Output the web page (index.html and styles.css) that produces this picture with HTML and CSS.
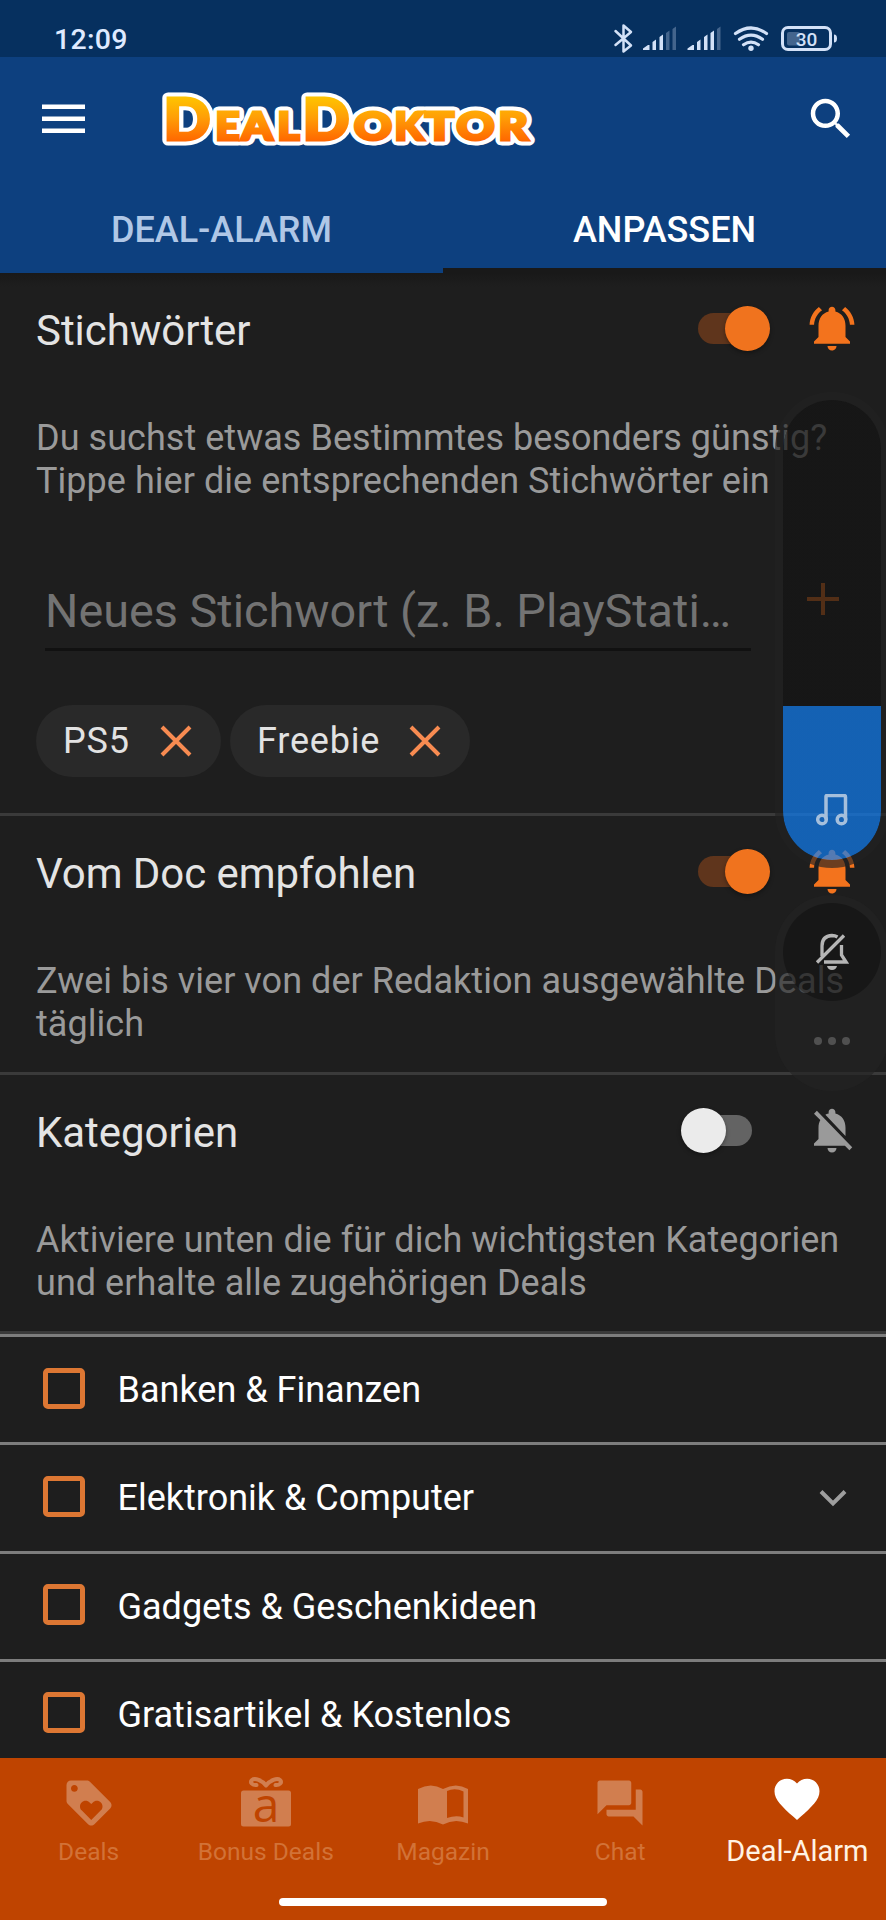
FILE: index.html
```html
<!DOCTYPE html>
<html lang="de">
<head>
<meta charset="utf-8">
<title>DealDoktor</title>
<link rel="stylesheet" href="styles.css">
</head>
<body>
<svg class="defs" width="0" height="0" aria-hidden="true">
  <symbol id="bell-on" viewBox="0 0 24 24"><path d="M7.58 4.08L6.15 2.65C3.75 4.48 2.17 7.3 2.03 10.5h2c.15-2.65 1.51-4.97 3.55-6.42zm12.39 6.42h2c-.15-3.2-1.73-6.02-4.12-7.85l-1.42 1.43c2.02 1.45 3.39 3.77 3.54 6.42zM18 11c0-3.07-1.64-5.64-4.5-6.32V4c0-.83-.67-1.5-1.5-1.5s-1.5.67-1.5 1.5v.68C7.63 5.36 6 7.92 6 11v5l-2 2v1h16v-1l-2-2v-5zm-6 11c.14 0 .27-.01.4-.04.65-.14 1.18-.58 1.44-1.18.1-.24.15-.5.15-.78h-4c.01 1.1.9 2 2.01 2z"/></symbol>
  <symbol id="bell-off" viewBox="0 0 24 24"><path d="M20 18.69L7.84 6.14 5.27 3.49 4 4.76l2.8 2.8v.01c-.52.99-.8 2.16-.8 3.42v5l-2 2v1h13.73l2 2L21 19.72l-1-1.03zM12 22c1.11 0 2-.89 2-2h-4c0 1.11.89 2 2 2zm6-7.32V11c0-3.08-1.64-5.64-4.5-6.32V4c0-.83-.67-1.5-1.5-1.5s-1.5.67-1.5 1.5v.68c-.15.03-.29.08-.42.12-.1.03-.2.07-.3.11h-.01c-.01 0-.01 0-.02.01-.23.09-.46.2-.68.31 0 0-.01 0-.01.01L18 14.68z"/></symbol>
  <symbol id="cross" viewBox="0 0 32 32"><path d="M2 2L30 30M30 2L2 30" fill="none" stroke="currentColor" stroke-width="4"/></symbol>
</svg>
<div class="screen">
  <header class="header">
    <div class="status">
      <span class="clock">12:09</span>
      <svg class="status-icons" viewBox="612 22 228 33">
        <path class="line" d="M615.500 31L631 45.500L623.500 51.500V25.500L631 32L615.500 45" stroke-width="2.500"/>
        <g>
          <path d="M643 50v-1.500l5-3.500h1.500v5zM652.500 42l3.500-2.500V50h-3.500zM659.500 37l3.500-2.500V50h-3.500z"/>
          <path class="dim" d="M666 33l3.500-2.500V50h-3.500zM672.500 29l3.500-2.500V50h-3.500z"/>
        </g>
        <g transform="translate(44.500 0)">
          <path d="M643 50v-1.500l5-3.500h1.500v5zM652.500 42l3.500-2.500V50h-3.500zM659.500 37l3.500-2.500V50h-3.500zM666 33l3.500-2.500V50h-3.500z"/>
          <path class="dim" d="M672.500 29l3.500-2.500V50h-3.500z"/>
        </g>
        <path class="line" d="M735.500 33.500Q751 22.500 766.500 33.500M739.500 39.300Q751 31 762.500 39.300M743.500 44.700Q751 39.500 758.500 44.700" stroke-width="3.200"/>
        <circle cx="751" cy="48.300" r="2.700"/>
        <rect class="line" x="782.500" y="27.500" width="48" height="22" rx="5.500" stroke-width="3"/>
        <rect class="dim" x="787" y="32" width="13" height="13.500" rx="2"/>
        <path d="M834 34.500q3 0 3 4t-3 4z"/>
        <text x="806.500" y="45.700" text-anchor="middle">30</text>
      </svg>
    </div>
    <div class="appbar">
      <svg class="menu" viewBox="0 0 43 30"><path d="M0 .5h43v4.500H0zM0 12.500h43V17H0zM0 24.500h43V29H0z"/></svg>
      <svg class="logo" viewBox="160 90 380 58" role="img" aria-label="DealDoktor">
        <defs>
          <linearGradient id="fire" gradientUnits="userSpaceOnUse" x1="0" y1="96" x2="0" y2="141"><stop offset="0" stop-color="#ffc400"/><stop offset=".45" stop-color="#ff9f06"/><stop offset="1" stop-color="#ff6500"/></linearGradient>
          <g id="word">
            <text class="cap" x="163.500" y="138.700" textLength="47" lengthAdjust="spacingAndGlyphs">D</text>
            <text x="215.500" y="138.700" textLength="24" lengthAdjust="spacingAndGlyphs">E</text>
            <text x="241.500" y="138.700" textLength="31" lengthAdjust="spacingAndGlyphs">A</text>
            <text x="277.500" y="138.700" textLength="22" lengthAdjust="spacingAndGlyphs">L</text>
            <text class="cap" x="302.500" y="138.700" textLength="47" lengthAdjust="spacingAndGlyphs">D</text>
            <text x="354" y="138.700" textLength="38" lengthAdjust="spacingAndGlyphs">O</text>
            <text x="394.500" y="138.700" textLength="29" lengthAdjust="spacingAndGlyphs">K</text>
            <text x="425" y="138.700" textLength="29" lengthAdjust="spacingAndGlyphs">T</text>
            <text x="456.500" y="138.700" textLength="38" lengthAdjust="spacingAndGlyphs">O</text>
            <text x="498.500" y="138.700" textLength="29.500" lengthAdjust="spacingAndGlyphs">R</text>
          </g>
        </defs>
        <use href="#word" class="outline"/>
        <use href="#word" class="fill"/>
      </svg>
      <svg class="search" viewBox="0 0 24 24"><path d="M15.500 14h-.79l-.28-.27C15.410 12.590 16 11.110 16 9.500 16 5.910 13.090 3 9.500 3S3 5.910 3 9.500 5.910 16 9.500 16c1.610 0 3.090-.59 4.230-1.570l.27.28v.79l5 4.990L20.490 19l-4.990-5zm-6 0C7.010 14 5 11.990 5 9.500S7.010 5 9.500 5 14 7.010 14 9.500 11.990 14 9.500 14z"/></svg>
    </div>
    <nav class="tabs">
      <a class="tab">DEAL-ALARM</a>
      <a class="tab tab-active">ANPASSEN</a>
    </nav>
  </header>

  <main class="content">
    <section class="section">
      <div class="head"><h2>Stichwörter</h2><span class="switch on"></span><svg class="bell orange"><use href="#bell-on"/></svg></div>
      <p>Du suchst etwas Bestimmtes besonders günstig?<br>Tippe hier die entsprechenden Stichwörter ein</p>
      <div class="entry">
        <div class="field">Neues Stichwort (z. B. PlayStati…</div>
        <svg class="plus" viewBox="0 0 32 32"><path d="M14 0h4v14h14v4H18v14h-4V18H0v-4h14z"/></svg>
      </div>
      <div class="chips">
        <span class="chip">PS5<svg><use href="#cross"/></svg></span>
        <span class="chip">Freebie<svg><use href="#cross"/></svg></span>
      </div>
    </section>
    <section class="section">
      <div class="head"><h2>Vom Doc empfohlen</h2><span class="switch on"></span><svg class="bell orange"><use href="#bell-on"/></svg></div>
      <p>Zwei bis vier von der Redaktion ausgewählte Deals<br>täglich</p>
    </section>
    <section class="section">
      <div class="head"><h2>Kategorien</h2><span class="switch"></span><svg class="bell"><use href="#bell-off"/></svg></div>
      <p>Aktiviere unten die für dich wichtigsten Kategorien<br>und erhalte alle zugehörigen Deals</p>
    </section>
    <ul class="list">
      <li><span class="box"></span>Banken &amp; Finanzen</li>
      <li><span class="box"></span>Elektronik &amp; Computer<svg class="chevron" viewBox="0 0 28 18"><path d="M2 2.500l12 12 12-12"/></svg></li>
      <li><span class="box"></span>Gadgets &amp; Geschenkideen</li>
      <li><span class="box"></span>Gratisartikel &amp; Kostenlos</li>
    </ul>
  </main>

  <footer class="bottom">
    <a class="item"><svg viewBox="0 0 24 24"><path d="M21.410 11.580l-9-9C12.050 2.220 11.550 2 11 2H4c-1.100 0-2 .9-2 2v7c0 .55.22 1.050.59 1.420l9 9c.36.36.86.58 1.410.58.55 0 1.050-.22 1.410-.59l7-7c.37-.36.59-.86.59-1.410 0-.55-.23-1.060-.59-1.420zM5.500 7C4.670 7 4 6.330 4 5.500S4.670 4 5.500 4 7 4.670 7 5.500 6.330 7 5.500 7zm11.770 8.270L13 19.540l-4.270-4.270C8.280 14.810 8 14.190 8 13.500c0-1.380 1.120-2.500 2.500-2.500.69 0 1.320.28 1.770.74l.73.72.73-.73c.45-.45 1.080-.73 1.770-.73 1.380 0 2.500 1.120 2.500 2.500 0 .69-.28 1.320-.73 1.770z"/></svg><span>Deals</span></a>
    <a class="item"><svg viewBox="0 0 54 54"><rect x="2" y="14.500" width="50" height="36" rx="2.500"/><path class="ribbon" d="M27 9.500C23 4.500 16 1.500 13 4S14 9.500 17.500 9M27 9.500C31 4.500 38 1.500 41 4S40 9.500 36.500 9"/><text x="27" y="45.500" text-anchor="middle">a</text></svg><span>Bonus Deals</span></a>
    <a class="item"><svg viewBox="0 0 54 54"><path d="M2 13Q15 6 27 13Q40 6 52 13V47.500Q39 42 27 48.500Q15 42 2 47.500ZM31 15V42Q40 39 47.500 41.500V15.500Q39 11.500 31 15Z" fill-rule="evenodd"/></svg><span>Magazin</span></a>
    <a class="item"><svg viewBox="0 0 24 24"><path d="M21 6h-2v9H6v2c0 .55.45 1 1 1h11l4 4V7c0-.55-.45-1-1-1zm-4 6V3c0-.55-.45-1-1-1H3c-.55 0-1 .45-1 1v14l4-4h10c.55 0 1-.45 1-1z"/></svg><span>Chat</span></a>
    <a class="item item-active"><svg viewBox="0 0 24 24"><path d="M12 21.350l-1.450-1.320C5.400 15.360 2 12.280 2 8.500 2 5.420 4.420 3 7.500 3c1.740 0 3.410.81 4.500 2.090C13.090 3.810 14.760 3 16.500 3 19.580 3 22 5.420 22 8.500c0 3.780-3.400 6.860-8.550 11.540L12 21.350z"/></svg><span>Deal-Alarm</span></a>
    <div class="home"></div>
  </footer>

  <div class="volume">
    <div class="level"><svg viewBox="0 0 32 32"><path d="M10 25.500V2.500Q10 1.500 11 1.500H28Q29.500 1.500 29.500 3V25.500"/><circle cx="6" cy="25.500" r="4.300"/><circle cx="25.500" cy="25.500" r="4.300"/></svg></div>
  </div>
  <div class="sound">
    <div class="mute"><svg viewBox="0 0 34 38"><path d="M7 23V13Q7 3 17 2.500Q20 2.500 22.500 4M2 29.500L29 2.500M9 29H31L26.500 22V12"/><path class="solid" d="M12 33h10q-1 4-5 4t-5-4z"/></svg></div>
    <div class="dots"><i></i><i></i><i></i></div>
  </div>
</div>
</body>
</html>
```

FILE: styles.css
```css
* { box-sizing: border-box; }
body { margin: 0; background: #1e1e1e; font-family: Roboto, sans-serif; }
h2, p, ul { margin: 0; padding: 0; font-weight: 400; }
svg { display: block; fill: currentColor; flex: none; }
.defs { position: absolute; }
.screen { position: relative; display: flex; flex-direction: column; width: 886px; height: 1920px; overflow: hidden; }

/* Header */
.header { flex: none; height: 273px; background: #0d407f; color: #fff; }
.status { display: flex; justify-content: space-between; height: 57px; padding: 22px 46px 0 54px; background: #06305f; color: #d3e1f7; }
.clock { font-size: 28.500px; line-height: 35px; font-weight: 500; letter-spacing: .3px; color: #dfeaff; }
.status-icons { width: 228px; height: 33px; }
.status-icons .line { fill: none; stroke: currentColor; stroke-linecap: round; stroke-linejoin: round; }
.status-icons .dim { opacity: .3; }
.status-icons text { font-size: 19px; font-weight: 500; }
.appbar { display: flex; align-items: center; height: 125px; padding: 0 28px 0 42px; }
.menu { width: 43px; height: 30px; margin-top: -2px; }
.logo { width: 380px; height: 58px; margin-left: 75px; overflow: visible; }
.logo text { font-family: Lato, sans-serif; font-weight: 900; font-size: 38.500px; }
.logo .cap { font-size: 58px; }
.logo .outline { fill: #fff; stroke: #fff; stroke-width: 11px; stroke-linejoin: round; }
.logo .fill { fill: url(#fire); stroke: url(#fire); stroke-width: 3px; }
.search { width: 54px; height: 54px; margin: -2px 0 0 auto; }
.tabs { display: grid; grid-template-columns: 1fr 1fr; height: 91px; }
.tab { padding-top: 10px; text-align: center; font-size: 36px; line-height: 76px; font-weight: 500; color: #b0c7e6; }
.tab-active { color: #fff; border-bottom: 5px solid #191919; }

/* Settings sections */
.content { flex: 1; min-height: 0; overflow: hidden; background: linear-gradient(#191919, #1e1e1e 14px); }
.section { height: 259px; padding: 29px 27px 0 36px; border-bottom: 3px solid #3a3a3a; color: #9a9a9a; }
.section:first-child { height: 543px; }
.head { display: flex; align-items: center; height: 54px; }
.head h2 { flex: 1; padding-top: 4px; font-size: 42px; line-height: 50px; letter-spacing: -.05px; color: #e4e4e4; }
.section p { margin-top: 61px; font-size: 36px; line-height: 43px; letter-spacing: .04px; white-space: nowrap; }
.switch { position: relative; width: 54px; height: 31px; margin: -1px 53px 0 0; border-radius: 16px; background: #636363; }
.switch::after { content: ""; position: absolute; left: -17px; top: -7px; width: 45px; height: 45px; border-radius: 50%; background: #ebebeb; box-shadow: 0 2px 4px rgba(0,0,0,.35); }
.switch.on { background: #5f351c; }
.switch.on::after { left: 27px; background: #f0731e; }
.bell { width: 54px; height: 54px; margin-top: -3px; }
.orange, .plus { color: #f3731d; }
.entry { display: flex; margin-top: 80px; padding-left: 9px; }
.field { width: 706px; height: 68px; border-bottom: 3px solid #111; font-size: 46.800px; line-height: 57px; white-space: nowrap; color: #737373; }
.plus { width: 32px; height: 32px; margin-left: 56px; }
.chips { display: flex; gap: 9px; margin-top: 54px; }
.chip { display: flex; align-items: center; justify-content: space-between; width: 185px; height: 72px; padding: 0 29px 0 27px; border-radius: 36px; background: #292929; font-size: 36px; letter-spacing: .8px; color: #e2e2e2; }
.chip + .chip { width: 240px; }
.chip svg { width: 32px; height: 32px; color: #f88b51; }

/* Category list */
.list { list-style: none; }
.list li { display: flex; align-items: center; height: 108.250px; padding: 1px 39px 0 42.500px; border-top: 3px solid #7d7d7d; font-size: 36px; color: #fff; }
.box { width: 42px; height: 41px; margin: -4px 33px 0 0; border: 5px solid #dd7733; border-radius: 5px; }
.chevron { width: 28px; height: 18px; margin-left: auto; }
.chevron path { fill: none; stroke: #9e9e9e; stroke-width: 4px; }

/* Bottom navigation */
.bottom { flex: none; display: grid; grid-template-columns: repeat(5, 1fr); grid-template-rows: 140px 8px; height: 162px; background: #bf4400; color: #d17e4f; }
.item { display: flex; flex-direction: column; align-items: center; padding-top: 18px; font-size: 24.500px; line-height: 30px; color: #d27237; white-space: nowrap; }
.item svg { width: 54px; height: 54px; margin-bottom: 7px; overflow: visible; color: #d17e4f; }
.item text { font-family: "Open Sans", sans-serif; font-size: 48px; font-weight: 500; fill: #bf4400; }
.item .ribbon { fill: none; stroke: currentColor; stroke-width: 4px; stroke-linecap: round; }
.item-active { padding-top: 14px; font-size: 29px; color: #fff3e4; }
.item-active svg { color: #fff; margin-bottom: 10px; }
.home { grid-column: 1 / -1; justify-self: center; width: 328px; height: 8px; border-radius: 4px; background: #fff; }

/* System volume overlay */
.volume { position: absolute; left: 775px; top: 392px; width: 114px; height: 476px; border: 8px solid rgba(34,34,34,.65); border-radius: 57px; background: linear-gradient(rgba(20,20,20,.72) 306px, rgba(16,126,243,.7) 306px) padding-box; }
.level { display: flex; justify-content: center; padding-top: 394px; color: #a5bfdc; }
.level svg { width: 32px; height: 32px; fill: none; stroke: currentColor; stroke-width: 3.500px; }
.sound { position: absolute; left: 775px; top: 895px; width: 114px; height: 196px; padding: 8px; border-radius: 57px; background: rgba(35,35,35,.65); }
.mute { display: flex; justify-content: center; width: 98px; height: 98px; padding-top: 30px; border-radius: 50%; background: rgba(0,0,0,.3); color: #b5b5b5; }
.mute svg { width: 34px; height: 38px; fill: none; stroke: currentColor; stroke-width: 3.300px; }
.mute .solid { fill: currentColor; stroke: none; }
.dots { display: flex; justify-content: center; gap: 6px; margin-top: 36px; }
.dots i { width: 8px; height: 8px; border-radius: 50%; background: #505050; }
```
